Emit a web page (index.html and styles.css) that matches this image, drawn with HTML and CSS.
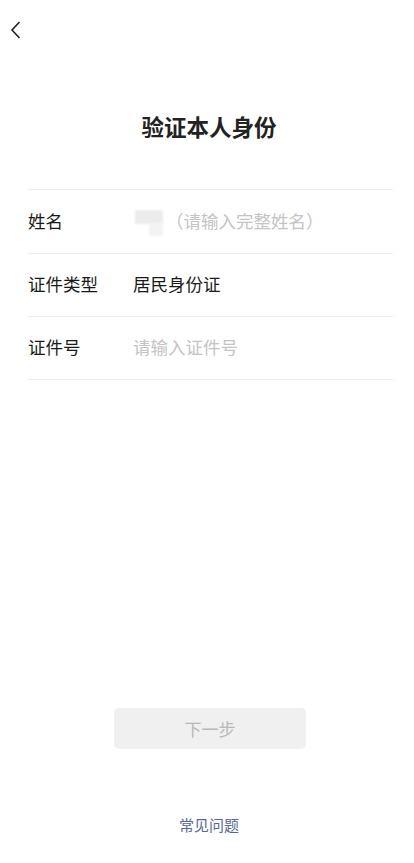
FILE: index.html
```html
<!DOCTYPE html>
<html lang="zh-CN">
<head>
    <meta charset="UTF-8">
    <meta name="viewport" content="width=device-width, initial-scale=1.0">
    <title>验证本人身份</title>
    <link rel="stylesheet" href="styles.css">
</head>
<body>

<div class="header">
    <!-- 返回 -->
    <svg class="back" width="12" height="20" viewBox="0 0 12 20">
        <path d="M9.5 2 L2 10 L9.5 18" fill="none" stroke="#222" stroke-width="1.6" />
    </svg>
</div>

<h1 class="title">验证本人身份</h1>

<div class="form">
    <div class="row">
        <span class="label">姓名</span>
        <span class="value">
            <span class="mask"><i class="m1"></i><i class="m2"></i></span>
            <span class="placeholder">（请输入完整姓名）</span>
        </span>
    </div>
    <div class="row">
        <span class="label">证件类型</span>
        <span class="value">居民身份证</span>
    </div>
    <div class="row">
        <span class="label">证件号</span>
        <span class="value placeholder">请输入证件号</span>
    </div>
</div>

<button class="next" disabled>下一步</button>

<div class="faq">常见问题</div>

</body>
</html>
```

FILE: styles.css
```css
body {
    margin: 0;
    font-family: "Noto Sans CJK SC", "Noto Sans", sans-serif;
    color: #1a1a1a;
    background: #fff;
}
.header {
    height: 60px;
    padding: 20px 0 0 10px;
    box-sizing: border-box;
}
.back {
    display: block;
}
.title {
    margin: 51px 0 48px;
    font-size: 22.5px;
    line-height: 30px;
    font-weight: 600;
    text-align: center;
    color: #222;
    padding-left: 4px;
}
.form {
    margin: 0 21px 0 28px;
}
.row {
    display: flex;
    align-items: center;
    height: 63px;
    padding-bottom: 3px;
    box-sizing: border-box;
    border-top: 1px solid #ededed;
    font-size: 17.5px;
}
.row:first-child {
    height: 64px;
}
.row:last-child {
    border-bottom: 1px solid #ededed;
    height: 64px;
}
.label {
    width: 105px;
}
.value {
    display: flex;
    align-items: center;
}
.placeholder {
    color: #c4c4c4;
}
.mask {
    position: relative;
    width: 33px;
    height: 30px;
    margin-top: 4px;
}
.mask i {
    position: absolute;
    background: #ececec;
    filter: blur(1px);
}
.mask .m1 {
    left: 2px;
    top: 3px;
    width: 28px;
    height: 14px;
}
.mask .m2 {
    left: 16px;
    top: 16px;
    width: 14px;
    height: 13px;
    background: #f3f3f3;
}
.next {
    display: block;
    width: 192px;
    height: 41px;
    margin: 328px 0 0 114px;
    border: none;
    border-radius: 5px;
    background: #f0f0f0;
    color: #b8b8b8;
    font-family: inherit;
    font-size: 17px;
}
.faq {
    margin-top: 66px;
    text-align: center;
    font-size: 15px;
    line-height: 20px;
    color: #56689a;
    padding-left: 4px;
}
```
